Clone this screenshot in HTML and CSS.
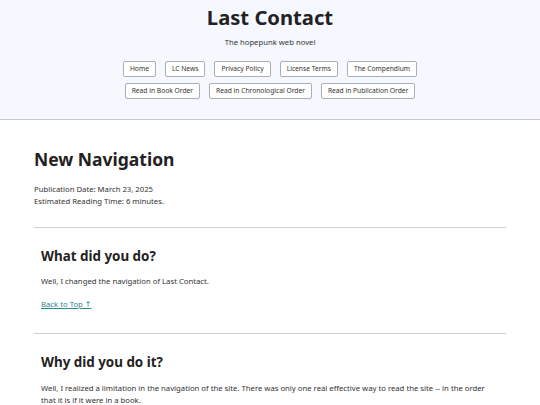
FILE: index.html
```html
<!DOCTYPE html>
<html lang="en">
<head>
<meta charset="utf-8">
<title>New Navigation - Last Contact</title>
<link rel="stylesheet" href="styles.css">
</head>
<body>
<header class="site-header">
  <h1 class="site-title">Last Contact</h1>
  <p class="tagline">The hopepunk web novel</p>
  <nav class="nav">
    <div class="nav-row">
      <a class="btn" href="#">Home</a>
      <a class="btn" href="#">LC News</a>
      <a class="btn" href="#">Privacy Policy</a>
      <a class="btn" href="#">License Terms</a>
      <a class="btn" href="#">The Compendium</a>
    </div>
    <div class="nav-row">
      <a class="btn" href="#">Read in Book Order</a>
      <a class="btn" href="#">Read in Chronological Order</a>
      <a class="btn" href="#">Read in Publication Order</a>
    </div>
  </nav>
</header>
<main class="content">
  <h2 class="page-title">New Navigation</h2>
  <p class="meta">Publication Date: March 23, 2025<br>Estimated Reading Time: 6 minutes.</p>
  <section class="section">
    <h3 class="section-title">What did you do?</h3>
    <p class="text">Well, I changed the navigation of Last Contact.</p>
    <p class="text"><a class="top-link" href="#">Back to Top ↑</a></p>
  </section>
  <section class="section">
    <h3 class="section-title">Why did you do it?</h3>
    <p class="text text-lead">Well, I realized a limitation in the navigation of the site. There was only one real effective way to read the site -- in the order that it is if it were in a book.</p>
  </section>
</main>
</body>
</html>
```
FILE: styles.css
```css
html, body {
  margin: 0;
  padding: 0;
}
body {
  font-family: "Noto Sans", "DejaVu Sans", sans-serif;
  color: #2b2b2b;
  background: #ffffff;
}
.site-header {
  background: #f5f8ff;
  border-bottom: 1px solid #c8c8cc;
  text-align: center;
  padding: 4px 0 20px;
}
.site-title {
  margin: 0;
  font-size: 20.2px;
  line-height: 26px;
  font-weight: 700;
  color: #222;
}
.tagline {
  margin: 7px 0 0;
  font-size: 7.7px;
  line-height: 10px;
  color: #333;
}
.nav {
  margin-top: 14px;
  display: flex;
  flex-direction: column;
  align-items: center;
  gap: 6px;
}
.nav-row {
  display: flex;
  justify-content: center;
  gap: 9px;
}
.btn {
  display: inline-block;
  font-size: 6.7px;
  line-height: 10px;
  padding: 2px 6px;
  border: 1px solid #a9afba;
  border-radius: 2px;
  background: #fff;
  color: #333;
  text-decoration: none;
}
.content {
  padding: 0 34px;
}
.page-title {
  margin: 28px 0 0;
  font-size: 17.5px;
  line-height: 22px;
  font-weight: 700;
  color: #222;
}
.meta {
  margin: 13px 0 0;
  font-size: 7.72px;
  line-height: 12px;
  color: #333;
}
.section {
  border-top: 1px solid #cfcfcf;
  margin-top: 20px;
  padding: 19px 7px 3px;
}
.section-title {
  margin: 0;
  font-size: 13.4px;
  line-height: 18px;
  font-weight: 700;
  color: #222;
}
.text {
  margin: 11px 0 0;
  font-size: 7.72px;
  line-height: 11.5px;
  color: #333;
}
.text-lead {
  margin-top: 12px;
}
.top-link {
  color: #2a8a8c;
  text-decoration: underline;
}
```
